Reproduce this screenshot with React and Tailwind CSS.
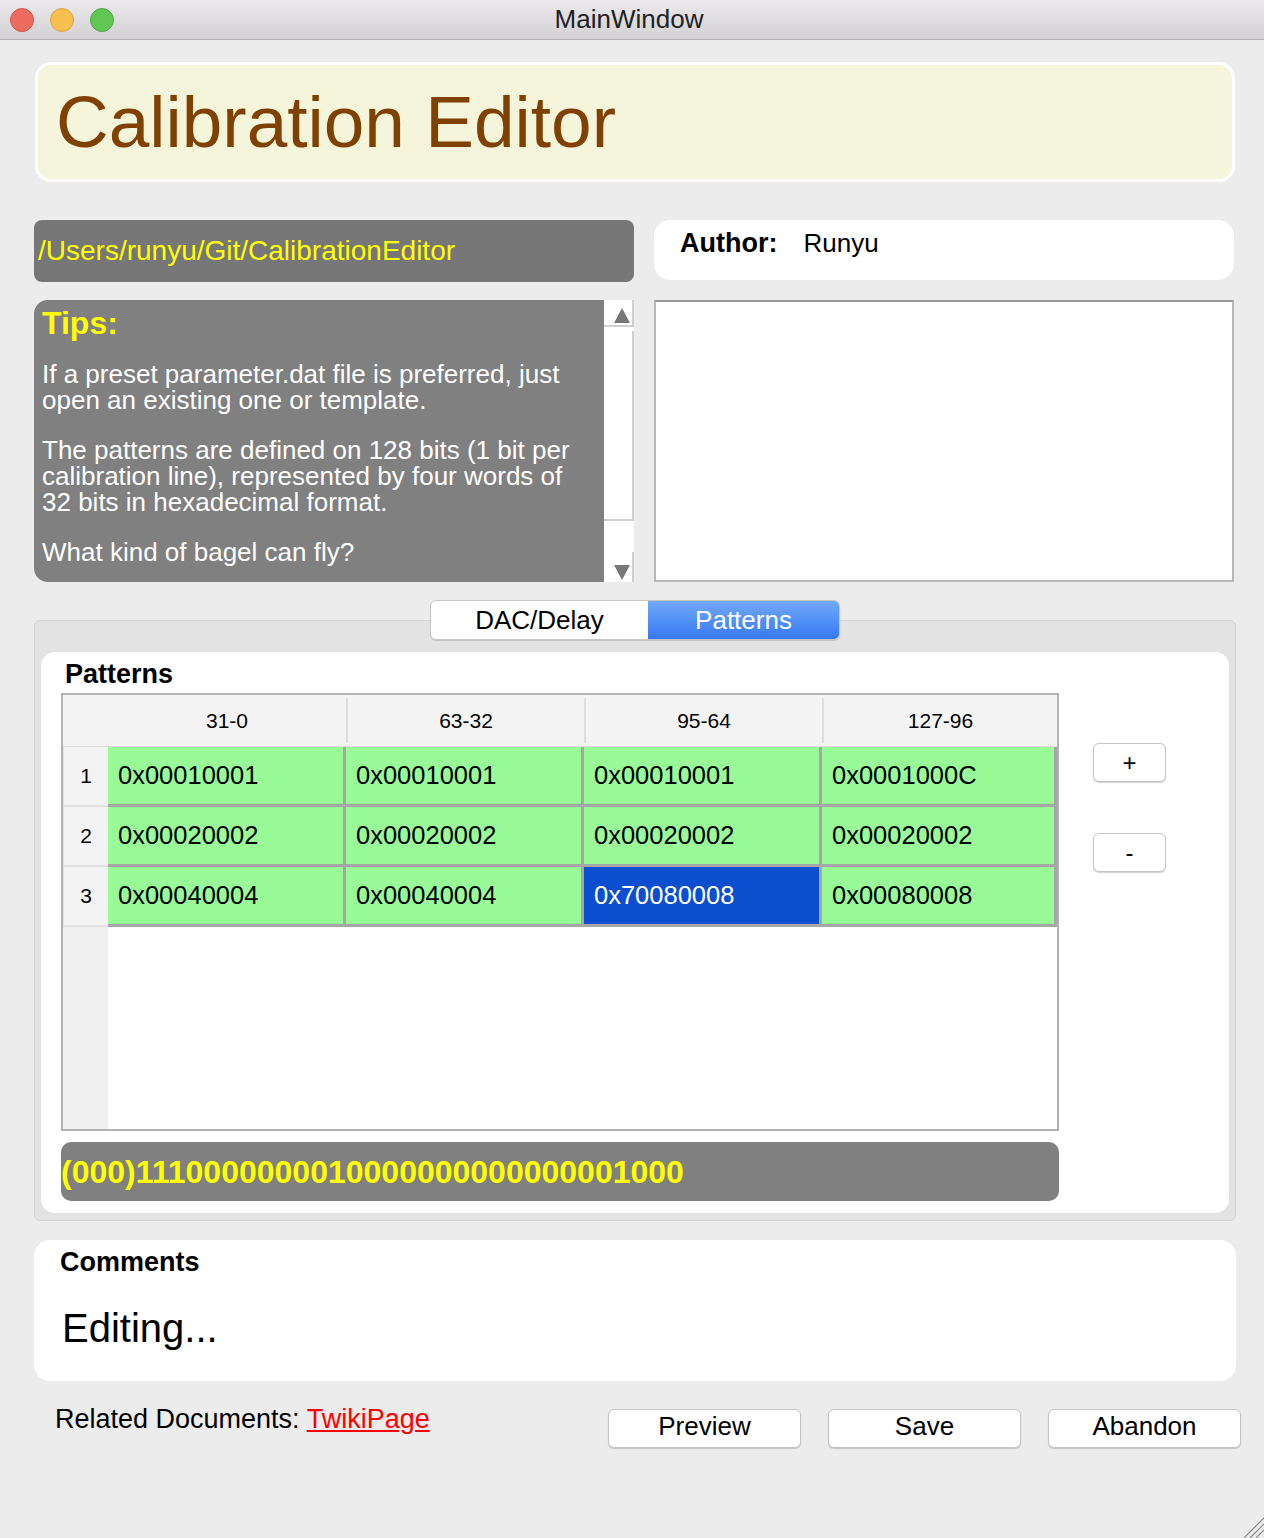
// Fenêtre principale de l'éditeur de calibration
const lignes = [
    { num: 1, mots: ["0x00010001", "0x00010001", "0x00010001", "0x0001000C"] },
    { num: 2, mots: ["0x00020002", "0x00020002", "0x00020002", "0x00020002"] },
    { num: 3, mots: ["0x00040004", "0x00040004", "0x70080008", "0x00080008"] },
];

const entetes = ["31-0", "63-32", "95-64", "127-96"];

// Barre de titre façon macOS
const TitleBar = () => (
    <div className="relative flex h-[40px] items-center border-b border-[#b0b0b0] bg-gradient-to-b from-[#ebe9eb] to-[#d3d1d3] pl-[10px]">
        <div className="flex gap-[16px]">
            <span className="h-[24px] w-[24px] rounded-full border border-[#d5574b] bg-[#ee6b60]" />
            <span className="h-[24px] w-[24px] rounded-full border border-[#dba33f] bg-[#f6c04f]" />
            <span className="h-[24px] w-[24px] rounded-full border border-[#4ea642] bg-[#62c655]" />
        </div>
        <span className="absolute left-0 right-0 pr-[6px] text-center text-[26px] text-[#222]">MainWindow</span>
    </div>
);

// Flèches de la barre de défilement
const Arrow = ({ up }) => (
    <svg width="16" height="15" viewBox="0 0 16 15" aria-hidden="true">
        {up ? <polygon points="8,0 16,15 0,15" fill="#777" /> : <polygon points="0,0 16,0 8,15" fill="#777" />}
    </svg>
);

const ScrollBar = () => (
    <div className="flex w-[30px] flex-col bg-white">
        <div className="flex h-[27px] items-end justify-end border-b-2 border-r-2 border-[#cfcfcf] pb-[2px] pr-[2px]">
            <Arrow up />
        </div>
        <div className="mt-[4px] h-[190px] border-b-2 border-r-2 border-[#cfcfcf]" />
        <div className="flex-1" />
        <div className="flex h-[30px] items-end justify-end border-r-2 border-[#cfcfcf] pb-[2px] pr-[2px]">
            <Arrow />
        </div>
    </div>
);

const Button = ({ children, className }) => (
    <button className={`h-[39px] shrink-0 rounded-[6px] border border-[#c4c4c4] bg-white leading-none text-black shadow-[0_1px_1px_rgba(0,0,0,0.18)] ${className}`}>
        {children}
    </button>
);

// Tableau des motifs
const PatternTable = () => (
    <div className="w-[998px] shrink-0 border-2 border-[#b2b2b2] bg-white">
        <div className="grid h-[52px] grid-cols-[45px_238px_238px_238px_1fr] border-b border-[#dcdcdc] bg-[#f4f4f4] text-[21px]">
            <div />
            {entetes.map((t, i) => (
                <div
                    key={t}
                    className={`my-[3px] flex items-center justify-center ${i > 0 ? "border-l-2 border-[#dedede]" : ""}`}
                >
                    {t}
                </div>
            ))}
        </div>
        {lignes.map((ligne) => (
            <div key={ligne.num} className="grid h-[60px] grid-cols-[45px_238px_238px_238px_1fr]">
                <div className="flex items-center justify-center border-b-2 border-l border-[#e2e2e2] bg-[#f3f3f3] text-[21px]">
                    {ligne.num}
                </div>
                {ligne.mots.map((mot, i) => {
                    const sel = ligne.num === 3 && i === 2;
                    return (
                        <div
                            key={i}
                            className={`flex items-center border-b-[3px] border-r-[3px] border-[#a6a6a6] pl-[10px] text-[25.5px] ${
                                sel ? "bg-[#0b4fd0] text-white" : "bg-[#98fb98] text-black"
                            }`}
                        >
                            {mot}
                        </div>
                    );
                })}
            </div>
        ))}
        <div className="flex h-[202px]">
            <div className="w-[45px] bg-[#f0f0f0]" />
            <div className="flex-1 bg-white" />
        </div>
    </div>
);

export default function App() {
    return (
        <div
            className="relative h-[1538px] w-[1264px] overflow-hidden bg-[#ececec] text-black"
            style={{ fontFamily: '"Liberation Sans", Arial, sans-serif' }}
        >
            <TitleBar />

            <div className="w-[1264px] pl-[34px]">
                {/* Titre */}
                <div className="ml-[1px] mt-[22px] h-[120px] w-[1200px] rounded-[16px] border-[3px] border-white bg-[#f5f5dc] pl-[18px] pt-[20px]">
                    <h1 className="text-[73px] leading-none text-[#804000]">Calibration Editor</h1>
                </div>

                {/* Chemin, auteur, astuces */}
                <div className="mt-[38px] grid grid-cols-[600px_580px] gap-x-[20px]">
                    <div className="flex flex-col gap-[18px]">
                        <div className="flex h-[62px] items-center whitespace-nowrap rounded-[8px] bg-[#777777] pl-[4px] text-[28px] text-[#ffff00]">
                            /Users/runyu/Git/CalibrationEditor
                        </div>
                        <div className="flex h-[282px]">
                            <div className="flex-1 whitespace-nowrap rounded-l-[14px] bg-[#808080] pl-[8px] pt-[5px] text-white">
                                <div className="text-[32px] font-bold leading-[36px] text-[#ffff00]">Tips:</div>
                                <p className="mt-[20px] text-[26px] leading-[26px]">
                                    If a preset parameter.dat file is preferred, just
                                    <br />
                                    open an existing one or template.
                                </p>
                                <p className="mt-[24px] text-[26px] leading-[26px]">
                                    The patterns are defined on 128 bits (1 bit per
                                    <br />
                                    calibration line), represented by four words of
                                    <br />
                                    32 bits in hexadecimal format.
                                </p>
                                <p className="mt-[24px] text-[26px] leading-[26px]">
                                    What kind of bagel can fly?
                                </p>
                            </div>
                            <ScrollBar />
                        </div>
                    </div>
                    <div className="flex flex-col gap-[20px]">
                        <div className="flex h-[60px] items-start gap-[26px] rounded-[16px] bg-white pl-[26px] pt-[8px] text-[26px] leading-[30px]">
                            <span className="text-[27px] font-bold">Author:</span>
                            <span>Runyu</span>
                        </div>
                        <div className="h-[282px] border-2 border-[#b8b8b8] border-t-[#9a9a9a] bg-white" />
                    </div>
                </div>

                {/* Onglets */}
                <div className="relative z-10 mt-[18px] flex w-[1202px] justify-center">
                    <div className="flex h-[40px] overflow-hidden rounded-[6px] border border-[#c6c6c6] text-[26px] shadow-[0_1px_1px_rgba(0,0,0,0.15)]">
                        <div className="flex w-[217px] items-center justify-center bg-white">DAC/Delay</div>
                        <div className="flex w-[191px] items-center justify-center bg-gradient-to-b from-[#72a9f7] to-[#3578f5] text-white">
                            Patterns
                        </div>
                    </div>
                </div>
                <div className="-mt-[20px] w-[1202px] rounded-[6px] border border-[#d4d4d4] bg-[#e3e3e3] px-[6px] pb-[7px] pt-[31px]">
                    <div className="h-[561px] rounded-[14px] bg-white pl-[20px] pt-[6px]">
                        <div className="pl-[4px] text-[27px] font-bold leading-[32px]">Patterns</div>
                        <div className="mt-[3px] flex">
                            <PatternTable />
                            <div className="ml-[34px] mt-[50px] flex flex-col gap-[51px]">
                                <Button className="w-[73px] text-[24px]">+</Button>
                                <Button className="w-[73px] text-[24px]">-</Button>
                            </div>
                        </div>
                        <div className="mt-[11px] flex h-[59px] w-[998px] items-center whitespace-nowrap rounded-[10px] bg-[#808080] text-[32px] font-bold text-[#ffff00]">
                            (000)1110000000010000000000000001000
                        </div>
                    </div>
                </div>

                {/* Commentaires */}
                <div className="mt-[19px] h-[141px] w-[1202px] rounded-[16px] bg-white pl-[26px] pt-[6px]">
                    <div className="text-[27px] font-bold leading-[32px]">Comments</div>
                    <div className="mt-[27px] pl-[2px] text-[40px] leading-[46px]">Editing...</div>
                </div>

                {/* Pied de page */}
                <div className="mt-[23px] flex items-start">
                    <div className="w-[574px] shrink-0 whitespace-nowrap pl-[21px] text-[27px] leading-[30px]">
                        Related Documents: <span className="text-[#ff0000] underline">TwikiPage</span>
                    </div>
                    <div className="mt-[5px] flex gap-[27px]">
                        <Button className="w-[193px] pb-[6px] text-[26px]">Preview</Button>
                        <Button className="w-[193px] pb-[6px] text-[26px]">Save</Button>
                        <Button className="w-[193px] pb-[6px] text-[26px]">Abandon</Button>
                    </div>
                </div>
            </div>

            {/* Poignée de redimensionnement */}
            <svg className="absolute bottom-0 right-0" width="24" height="24" viewBox="0 0 24 24" aria-hidden="true">
                <line x1="24" y1="4" x2="4" y2="24" stroke="#8a8a8a" strokeWidth="1.2" />
                <line x1="24" y1="10" x2="10" y2="24" stroke="#8a8a8a" strokeWidth="1.2" />
                <line x1="24" y1="16" x2="16" y2="24" stroke="#8a8a8a" strokeWidth="1.2" />
            </svg>
        </div>
    );
}
